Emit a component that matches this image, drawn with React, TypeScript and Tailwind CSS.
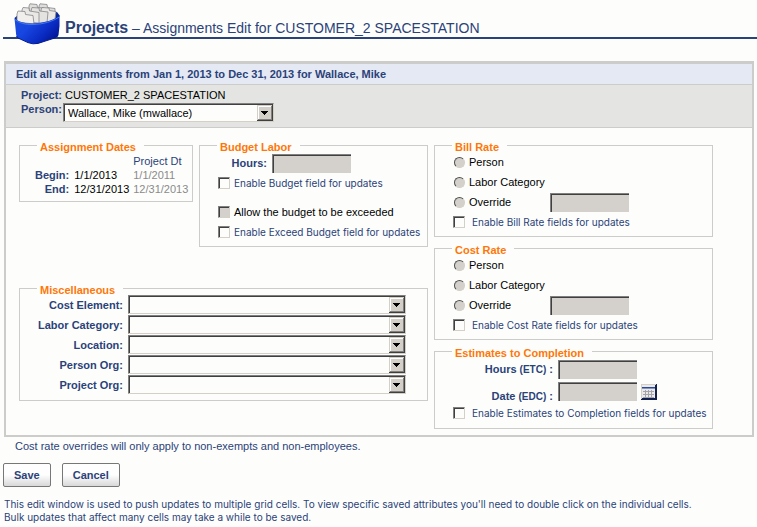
import { useId, type ReactNode } from "react";

const sunken =
  "appearance-none rounded-none border-t border-l border-[#808080] shadow-[inset_1px_1px_0_#404040]";

const smallText = "font-[Inter,'Liberation_Sans',sans-serif] text-[10px]";

function ProjectsIcon() {
  return (
    <svg width="48" height="42" viewBox="0 0 48 42" className="-mb-[7px] shrink-0" aria-hidden="true">
      <defs>
        <linearGradient id="box" x1="0" y1="0" x2="1" y2="0.6">
          <stop offset="0" stopColor="#1c4fdc" />
          <stop offset="0.4" stopColor="#1746e0" />
          <stop offset="0.75" stopColor="#0a2cc4" />
          <stop offset="1" stopColor="#04189a" />
        </linearGradient>
      </defs>
      <path d="M1.5 15 L5 12 L44 9 L47 13 L40 19 L4 20 Z" fill="#0a2796" />
      <g fill="#dfdedb" stroke="#85858a" strokeWidth="0.8" strokeLinejoin="round">
        <path d="M26 20 V3 L27 0.8 L34 1.5 L34.5 4.5 L42 5.5 V16 L38 20 Z" />
        <path d="M16 20 V3 L17 0.8 L24 1.5 L24.5 4.5 L31 5 V20 Z" />
        <path d="M28 20 V7 L29 4.5 L36 5 L36.5 7.5 L43 8.5 L42 16 L36 20 Z" fill="#e9e8e5" />
        <path d="M18 20 V8 L19 4.5 L26 5 L26.5 8 L35 9 L34 20 Z" fill="#e4e3e0" />
        <path d="M9 19 V7 L10 4.5 L16 5 L16.5 8 L26 9.5 V20 Z" fill="#e9e8e5" />
        <path d="M4 19 V11 L5 8 L12 8.5 L12.5 11.5 L20 12.5 L21 21 Z" fill="#f0efec" />
      </g>
      <path
        d="M1.5 15.5 Q9 21 20 20.5 Q36 20 46.5 13 Q47 23 45.5 32 Q45 34 43 34.6 L25 40.4 Q20 41.6 15 39.6 L5 35 Q3.6 34 3.2 32 Z"
        fill="url(#box)"
      />
      <path d="M1.8 16.5 Q9 22 20 21.5 Q36 21 46.3 14" fill="none" stroke="#4477f2" strokeWidth="1" />
      <path d="M3.6 33 Q4 34.4 5 35 L15 39.6 Q20 41.6 25 40.4 L43 34.6" fill="none" stroke="#051c8c" strokeWidth="1" />
    </svg>
  );
}

function CalendarIcon() {
  return (
    <svg width="16" height="16" viewBox="0 0 16 16" aria-hidden="true" shapeRendering="crispEdges">
      <rect width="16" height="16" fill="#10204f" />
      <rect width="15" height="15" fill="#d4d0c8" />
      <rect x="1" y="1" width="13" height="13" fill="#eceae6" />
      <rect x="1" y="3" width="13" height="1" fill="#2a4a9c" />
      <rect x="1" y="4" width="13" height="1" fill="#8496c4" />
      <path d="M2 7.5h11M2 10.5h11M2 13.5h11M4.5 6v8M7.5 6v8M10.5 6v8" stroke="#a4a4ac" />
      <path d="M14.5 1v14M1 14.5h14" stroke="#10204f" />
    </svg>
  );
}

function Select({ id, value = "" }: { id: string; value?: string }) {
  return (
    <div className="relative h-[19px] w-full border-t border-r border-b border-l border-t-[#808080] border-r-[#d4d0c8] border-b-[#d4d0c8] border-l-[#808080]">
      <select
        id={id}
        defaultValue={value}
        className="block h-[17px] w-full appearance-none border-t border-l border-[#404040] bg-[#fdfefc] pr-4 pl-[3px] leading-4 text-black"
      >
        <option value={value}>{value}</option>
      </select>
      <svg width="16" height="16" className="pointer-events-none absolute right-0 bottom-0" aria-hidden="true" shapeRendering="crispEdges">
        <rect width="16" height="16" fill="#404040" />
        <rect width="15" height="15" fill="#d4d0c8" />
        <rect x="1" y="1" width="14" height="14" fill="#808080" />
        <rect x="1" y="1" width="13" height="13" fill="#fff" />
        <rect x="2" y="2" width="12" height="12" fill="#d4d0c8" />
        <path d="M4 6h7v1h-1v1h-1v1h-1v1h-1v-1h-1v-1h-1v-1h-1z" fill="#000" />
      </svg>
    </div>
  );
}

function DisabledField({ id, label }: { id: string; label?: string }) {
  return <input id={id} type="text" disabled aria-label={label} className={`${sunken} h-[19px] w-[79px] shrink-0 bg-[#d4d1cc]`} />;
}

function Group({ title, className = "", children }: { title: string; className?: string; children: ReactNode }) {
  return (
    <fieldset className={`min-w-0 border border-[#cccdca] ${className}`}>
      <legend className="ml-[17px] pt-1 pr-2 pl-[3px] leading-[9px] font-bold text-[#ff7708]">{title}</legend>
      {children}
    </fieldset>
  );
}

function Check({ label, wide = false, disabled = false }: { label: string; wide?: boolean; disabled?: boolean }) {
  return (
    <label
      className={`flex h-5 items-center pl-[18px] whitespace-nowrap ${wide ? "gap-[7px]" : "gap-1"} ${disabled ? "text-black" : smallText}`}
    >
      <input
        type="checkbox"
        disabled={disabled}
        className={`${sunken} size-3 border-r border-b border-r-[#d4d0c8] border-b-[#d4d0c8] ${disabled ? "bg-[#d4d1cc]" : "bg-[#fdfefc]"}`}
      />
      {label}
    </label>
  );
}

function Radio({ name, label }: { name: string; label: string }) {
  return (
    <label className="flex h-5 w-24 items-center gap-1 text-black">
      <input
        type="radio"
        name={name}
        disabled
        className="size-[11px] appearance-none rounded-full border border-t-[#505050] border-r-[#d4d0c8] border-b-[#d4d0c8] border-l-[#505050] bg-[#d4d1cc]"
      />
      {label}
    </label>
  );
}

function RateGroup({ title }: { title: string }) {
  const id = useId();
  return (
    <Group title={`${title} Rate`} className="pb-1">
      <div className="pl-[19px]">
        <Radio name={id} label="Person" />
        <Radio name={id} label="Labor Category" />
        <div className="flex items-center">
          <Radio name={id} label="Override" />
          <DisabledField id={`${id}-override`} label={`${title} rate override`} />
        </div>
      </div>
      <Check wide label={`Enable ${title} Rate fields for updates`} />
    </Group>
  );
}

const miscFields = ["Cost Element", "Labor Category", "Location", "Person Org", "Project Org"];

const pushButton =
  "h-6 rounded-[2px] border border-[#777] bg-linear-to-b from-[#fefefe] from-50% to-[#d8d8d8] px-2.5 text-[11px] leading-4 font-bold";

export default function App() {
  return (
    <div className="min-h-screen bg-[#fdfefc] pt-[3px] font-['Liberation_Sans',Arial,sans-serif] text-[11px] text-[#2b4279]">
      <header className="ml-[3px] flex h-9 items-start border-b-2 border-[#2b4279] pl-2.5">
        <ProjectsIcon />
        <h1 className="pt-[15px] pl-1 text-[14px] leading-5 whitespace-nowrap">
          <strong className="text-[16px]">Projects</strong> – Assignments Edit for CUSTOMER_2 SPACESTATION
        </h1>
      </header>

      <main className="mt-[22px] mr-[3px] ml-1">
        <section className="border-2 border-t-3 border-[#cccdca]">
          <h2 className="border-b border-[#cccdca] bg-[#e4e9f4] pl-2.5 leading-5 font-bold">
            Edit all assignments from Jan 1, 2013 to Dec 31, 2013 for Wallace, Mike
          </h2>
          <div className="grid grid-cols-[56px_211px] gap-x-px border-b border-[#cccdca] bg-[#e4e5e2] pt-[3px] pb-[5px] leading-[14px]">
            <span className="text-right font-bold">Project:</span>
            <span className="pl-0.5 whitespace-nowrap text-black">CUSTOMER_2 SPACESTATION</span>
            <label htmlFor="person" className="text-right font-bold">Person:</label>
            <div className="pt-px">
              <Select id="person" value="Wallace, Mike (mwallace)" />
            </div>
          </div>

          <div className="grid grid-cols-[minmax(0,1fr)_279px] gap-1.5 pt-[11px] pr-[39px] pb-1.5 pl-[13px]">
            <div>
              <div className="flex items-start gap-1.5">
                <Group title="Assignment Dates" className="w-[174px] shrink-0 pt-0.5 pb-[5px]">
                  <table className="ml-[15px] leading-[14px] whitespace-nowrap">
                    <thead>
                      <tr>
                        <td className="w-[34px]" />
                        <td className="w-[59px]" />
                        <th scope="col" className="text-left font-normal">Project Dt</th>
                      </tr>
                    </thead>
                    <tbody>
                      <tr>
                        <th scope="row" className="pr-[5px] text-right">Begin:</th>
                        <td className="text-black">1/1/2013</td>
                        <td className="text-[#8a8a8a]">1/1/2011</td>
                      </tr>
                      <tr>
                        <th scope="row" className="pr-[5px] text-right">End:</th>
                        <td className="text-black">12/31/2013</td>
                        <td className="text-[#8a8a8a]">12/31/2013</td>
                      </tr>
                    </tbody>
                  </table>
                </Group>

                <Group title="Budget Labor" className="flex-1 pt-0.5 pb-1">
                  <div className="flex items-center gap-[5px]">
                    <label htmlFor="budget-hours" className="w-[67px] text-right font-bold">Hours:</label>
                    <DisabledField id="budget-hours" />
                  </div>
                  <Check label="Enable Budget field for updates" />
                  <div className="mt-[9px]">
                    <Check disabled label="Allow the budget to be exceeded" />
                    <Check label="Enable Exceed Budget field for updates" />
                  </div>
                </Group>
              </div>

              <Group title="Miscellaneous" className="mt-[35px] pr-[21px] pb-1.5">
                <div className="grid grid-cols-[103px_minmax(0,1fr)] items-center gap-x-[5px] gap-y-px">
                  {miscFields.map((name) => (
                    <div key={name} className="contents">
                      <label htmlFor={name} className="text-right leading-[18px] font-bold">{name}:</label>
                      <Select id={name} />
                    </div>
                  ))}
                </div>
              </Group>
            </div>

            <div className="flex flex-col gap-[5px]">
              <RateGroup title="Bill" />
              <RateGroup title="Cost" />
              <Group title="Estimates to Completion" className="pt-0.5 pb-[5px]">
                <div className="grid grid-cols-[118px_auto] gap-x-[5px] gap-y-[3px] font-bold">
                  <label htmlFor="etc" className="self-center text-right">
                    Hours <span className="text-[10px]">(ETC)</span> :
                  </label>
                  <DisabledField id="etc" />
                  <label htmlFor="edc" className="self-end text-right leading-2">
                    Date <span className="text-[10px]">(EDC)</span> :
                  </label>
                  <div className="flex items-center gap-1">
                    <DisabledField id="edc" />
                    <button type="button" aria-label="Choose date">
                      <CalendarIcon />
                    </button>
                  </div>
                </div>
                <div className="mt-0.5">
                  <Check wide label="Enable Estimates to Completion fields for updates" />
                </div>
              </Group>
            </div>
          </div>
        </section>

        <p className="pl-[11px] leading-[18px]">Cost rate overrides will only apply to non-exempts and non-employees.</p>
      </main>

      <div className="mt-2 ml-[3px] flex gap-[11px]">
        <button type="button" className={pushButton}>Save</button>
        <button type="button" className={pushButton}>Cancel</button>
      </div>

      <p className={`mt-[11px] ml-1 leading-[13px] ${smallText}`}>
        This edit window is used to push updates to multiple grid cells. To view specific saved attributes you'll need to double click on the individual cells.
        <br />
        Bulk updates that affect many cells may take a while to be saved.
      </p>
    </div>
  );
}
